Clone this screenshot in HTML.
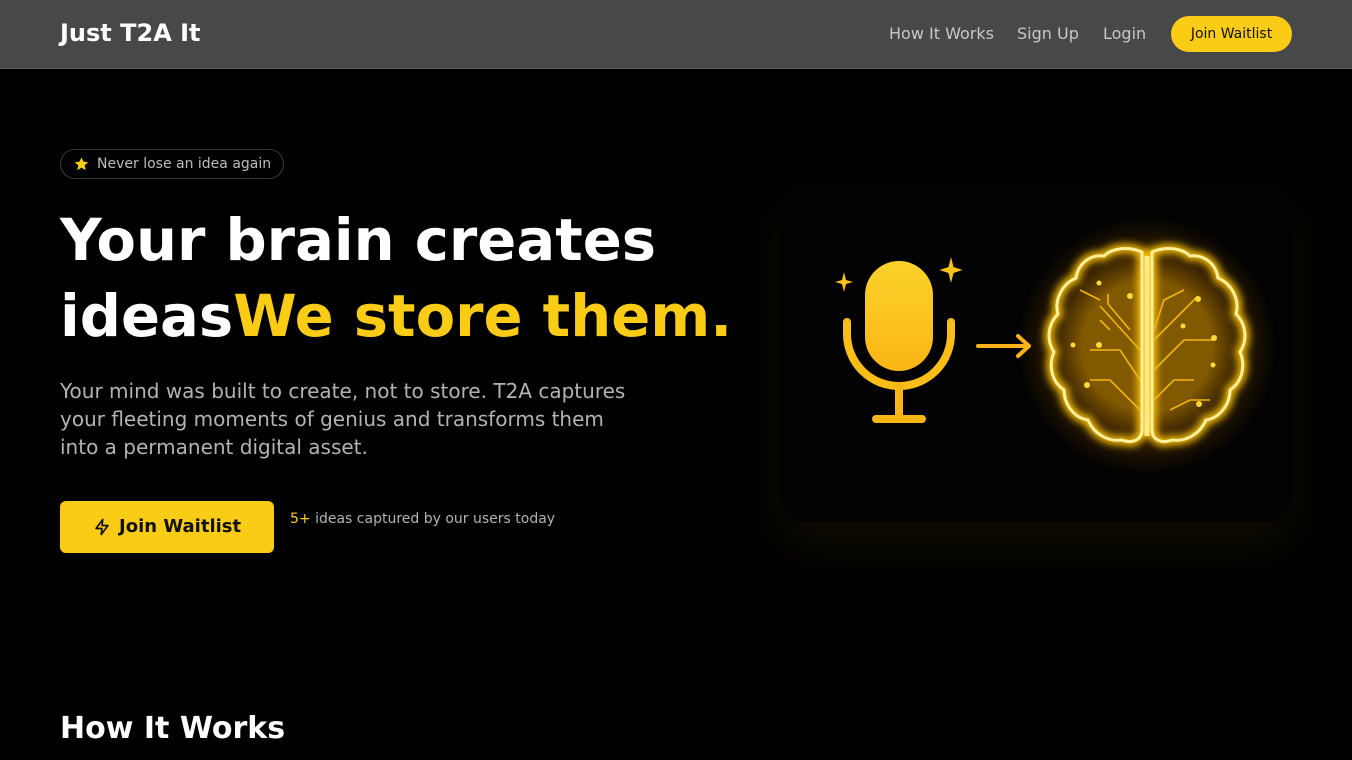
<!DOCTYPE html>
<html><head><meta charset="utf-8"><style>
*{margin:0;padding:0;box-sizing:border-box}
body{width:1352px;height:760px;overflow:hidden;background:#000;font-family:"DejaVu Sans","Liberation Sans",sans-serif;color:#fff;position:relative}
.hdr{position:absolute;left:0;top:0;width:1352px;height:69px;background:#484848;border-bottom:1px solid #5a5a5a}
.logo{position:absolute;left:60px;top:19px;font-size:24px;font-weight:bold;color:#fff}
.nav a{position:absolute;top:24px;font-size:16px;color:#c8c8c8;text-decoration:none}
.btn{position:absolute;left:1171px;top:16px;width:121px;height:36px;border-radius:18px;background:#facc15;color:#111;font-size:14px;text-align:center;line-height:36px}
.pill{position:absolute;left:60px;top:149px;width:224px;height:30px;border:1px solid #3a3a3a;border-radius:15px;font-size:14px;color:#bdbdbd;line-height:29px;padding-left:36px}
.pill svg{position:absolute;left:12px;top:6px}
h1{position:absolute;left:60px;top:203px;font-size:57.6px;line-height:76px;font-weight:bold}
h1 span{color:#facc15}
.p{position:absolute;left:60px;top:377px;width:580px;font-size:20px;line-height:28px;color:#b3b3b3}
.cta{position:absolute;left:60px;top:501px;width:214px;height:52px;background:#facc15;border-radius:6px;color:#111;font-weight:bold;font-size:18px;line-height:52px;padding-left:59px}
.cta svg{position:absolute;left:33px;top:16px}
.stat{position:absolute;left:290px;top:511px;font-size:14px;color:#b3b3b3}
.stat b{color:#facc15;font-weight:normal}
.card{position:absolute;left:780px;top:180px;width:512px;height:342px;border-radius:26px;background:#020202;box-shadow:0 25px 50px rgba(250,204,21,0.06);overflow:hidden}
h2{position:absolute;left:60px;top:711px;font-size:30px;font-weight:bold}
</style></head><body>
<div class="hdr"><div class="logo">Just T2A It</div>
<div class="nav"><a style="left:889px">How It Works</a><a style="left:1017px">Sign Up</a><a style="left:1103px">Login</a></div>
<div class="btn">Join Waitlist</div></div>
<div class="pill"><svg width="17" height="16" viewBox="0 0 24 24"><path d="M12 2l3 6.5 7 .8-5.2 4.8 1.5 7L12 17.6 5.7 21.1l1.5-7L2 9.3l7-.8z" fill="#facc15"/></svg>Never lose an idea again</div>
<h1>Your brain creates<br>ideas<span>We store them.</span></h1>
<div class="p">Your mind was built to create, not to store. T2A captures your fleeting moments of genius and transforms them into a permanent digital asset.</div>
<div class="cta"><svg width="18" height="20" viewBox="0 0 24 24" fill="none" stroke="#111" stroke-width="2.2" stroke-linejoin="round"><path d="M13 2L4 14h8l-1 8 9-12h-8z"/></svg>Join Waitlist</div>
<div class="stat"><b>5+</b> ideas captured by our users today</div>
<div class="card"><svg width="512" height="342" viewBox="780 180 512 342">
<defs><radialGradient id="g" cx="0.5" cy="0.5" r="0.5"><stop offset="0.5" stop-color="#ffb000" stop-opacity="0.5"/><stop offset="0.75" stop-color="#ff9900" stop-opacity="0.15"/><stop offset="1" stop-color="#ff9900" stop-opacity="0"/></radialGradient>
<linearGradient id="m" x1="0" y1="0" x2="0" y2="1"><stop offset="0" stop-color="#fcd22a"/><stop offset="1" stop-color="#fbb515"/></linearGradient>
<filter id="bl"><feGaussianBlur stdDeviation="4"/></filter></defs>
<rect x="865" y="261" width="68" height="110" rx="34" fill="url(#m)"/>
<path d="M847 322v12a52 52 0 0 0 104 0v-12" fill="none" stroke="#fbbd18" stroke-width="8" stroke-linecap="round"/>
<path d="M899 386v32M876 419h46" stroke="#fbb515" stroke-width="8" stroke-linecap="round"/>
<path d="M844 272l2 8 7 2-7 2-2 8-2-8-7-2 7-2z M951 257l2.5 10 9 3-9 3-2.5 10-2.5-10-9-3 9-3z" fill="#fcc419"/>
<path d="M978 346h50M1018 336l11 10-11 10" fill="none" stroke="#f8b418" stroke-width="4" stroke-linecap="round" stroke-linejoin="round"/>
<circle cx="1147" cy="346" r="130" fill="url(#g)"/>
<g fill="none" stroke="#ffc400" stroke-width="9" filter="url(#bl)"><path id="b" d="M1142 252c-14-6-30-4-38 4-14-2-26 8-28 22-14 6-22 22-18 36-10 10-12 26-4 38-6 14-2 30 10 38 0 14 10 28 24 30 6 14 20 22 34 20 10 4 20 0 20-10z"/><use href="#b" transform="translate(2294 0) scale(-1 1)"/><path d="M1147 256v180"/></g>
<g fill="none" stroke="#fff0a0" stroke-width="3"><path d="M1142 252c-14-6-30-4-38 4-14-2-26 8-28 22-14 6-22 22-18 36-10 10-12 26-4 38-6 14-2 30 10 38 0 14 10 28 24 30 6 14 20 22 34 20 10 4 20 0 20-10z"/><path d="M1152 252c14-6 30-4 38 4 14-2 26 8 28 22 14 6 22 22 18 36 10 10 12 26 4 38 6 14 2 30-10 38 0 14-10 28-24 30-6 14-20 22-34 20-10 4-20 0-20-10z"/></g>
<path d="M1147 256v180" stroke="#ffe98a" stroke-width="5"/>
<g fill="none" stroke="#f5b50f" stroke-width="1.6"><path d="M1140 350l-40-44M1130 330l-22-26v-10M1140 380l-20-30h-30M1140 410l-30-30h-20M1110 330l-10-10M1154 340l30-30 14-14M1154 370l30-30h30M1154 400l20-20h20M1154 330l10-30 20-10M1170 410l20-10h20M1100 300l-20-10"/></g>
<g fill="#ffd83a"><circle cx="1099" cy="345" r="3"/><circle cx="1073" cy="345" r="2.5"/><circle cx="1087" cy="385" r="3"/><circle cx="1130" cy="296" r="3"/><circle cx="1198" cy="299" r="3"/><circle cx="1214" cy="338" r="3"/><circle cx="1199" cy="404" r="3"/><circle cx="1183" cy="326" r="2.5"/><circle cx="1213" cy="365" r="2.5"/><circle cx="1099" cy="283" r="2.5"/></g>
</svg></div>
<h2>How It Works</h2>
</body></html>
